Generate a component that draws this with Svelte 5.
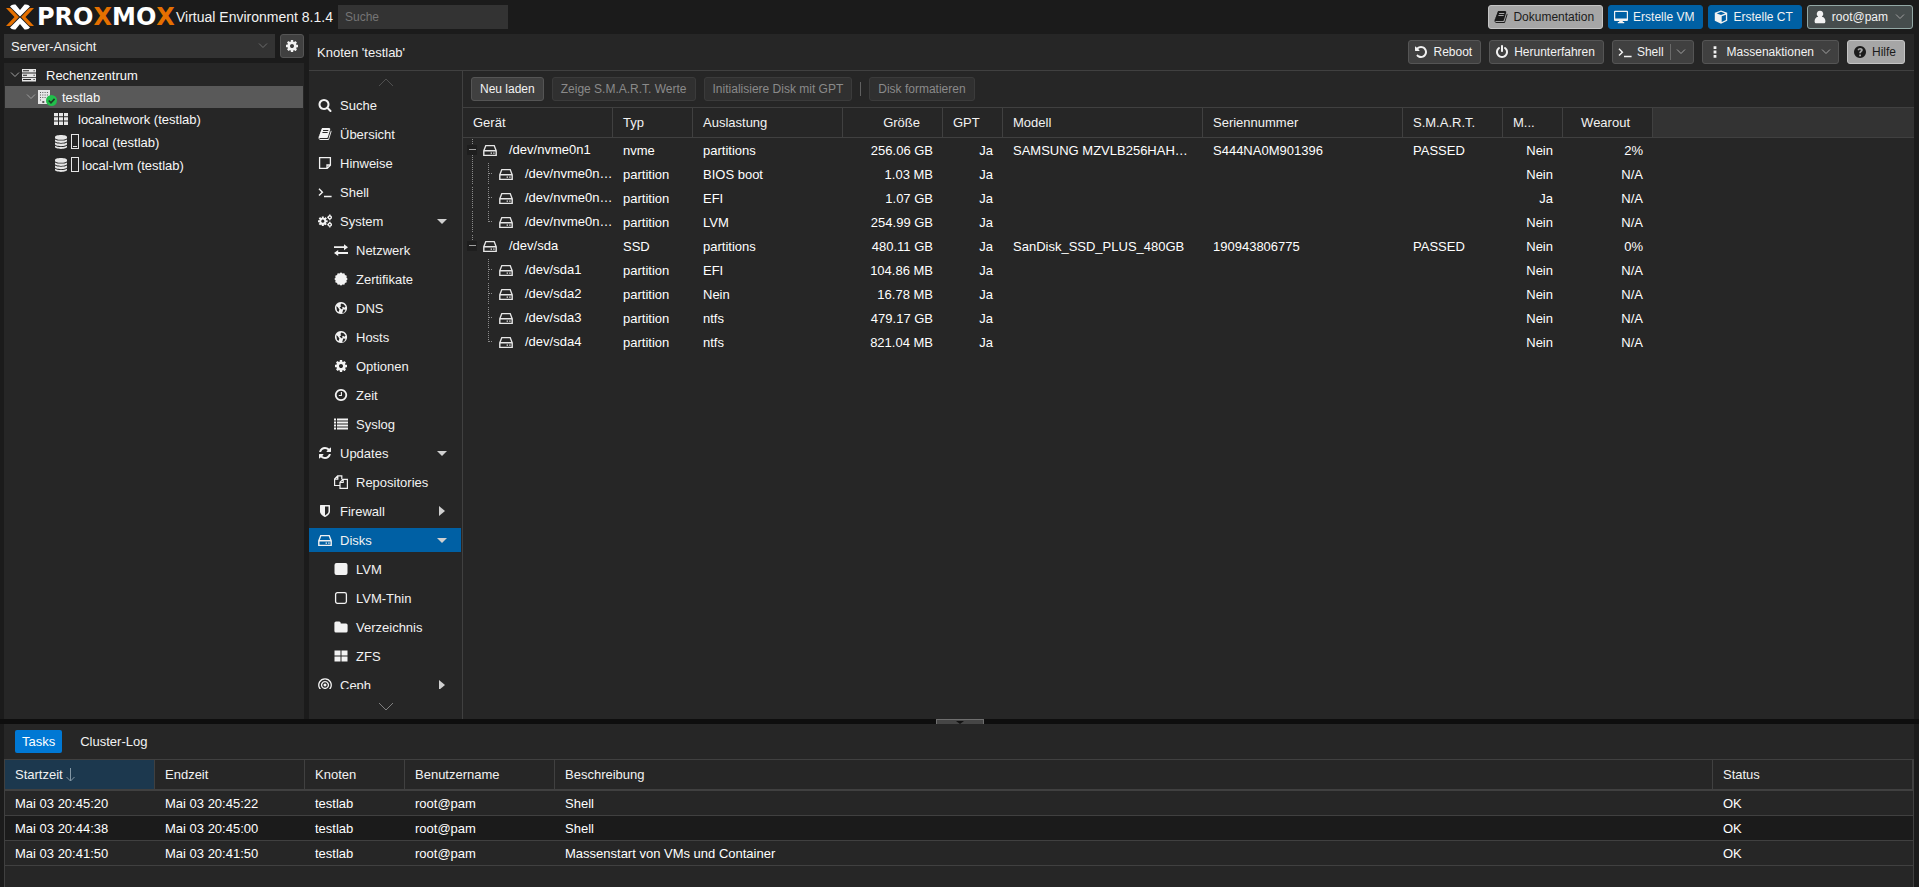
<script>
    const fa = 1792

    const cog = 'M1152 896q0-106-75-181t-181-75-181 75-75 181 75 181 181 75 181-75 75-181zm512-109v222q0 12-8 23t-20 13l-185 28q-19 54-39 91 35 50 107 138 10 12 10 25t-9 23q-27 37-99 108t-94 71q-12 0-26-9l-138-108q-44 23-91 38-16 136-29 186-7 28-36 28h-222q-14 0-24.5-8.5t-11.5-21.5l-28-184q-49-16-90-37l-141 107q-10 9-25 9-14 0-25-11-126-114-165-168-7-10-7-23 0-12 8-23 15-21 51-66.5t54-70.5q-27-50-41-99l-183-27q-13-2-21-12.5t-8-23.5v-222q0-12 8-23t19-13l186-28q14-46 39-92-40-57-107-138-10-12-10-24 0-10 9-23 26-36 98.5-107.5t94.5-71.5q13 0 26 10l138 107q44-23 91-38 16-136 29-186 7-28 36-28h222q14 0 24.5 8.5t11.5 21.5l28 184q49 16 90 37l142-107q9-9 24-9 13 0 25 10 129 119 165 170 7 8 7 22 0 12-8 23-15 21-51 66.5t-54 70.5q26 50 41 98l183 28q13 2 21 12.5t8 23.5z'

    // 12 pointed badge
    const burst = 'M' + Array.from({ length: 24 }, (_, i) => {
        const r = i % 2 ? 5.6 : 6.7
        const a = (i * Math.PI) / 12
        return (7 + r * Math.cos(a)).toFixed(2) + ' ' + (7 + r * Math.sin(a)).toFixed(2)
    }).join('L') + 'z'

    const icons = {
        cog: { box: fa, fill: cog },
        search: { box: fa, fill: 'M1216 832q0-185-131.5-316.5t-316.5-131.5-316.5 131.5-131.5 316.5 131.5 316.5 316.5 131.5 316.5-131.5 131.5-316.5zm512 832q0 52-38 90t-90 38q-54 0-90-38l-343-342q-179 124-399 124-143 0-273.5-55.5t-225-150-150-225-55.5-273.5 55.5-273.5 150-225 225-150 273.5-55.5 273.5 55.5 225 150 150 225 55.5 273.5q0 220-124 399l343 343q37 37 37 90z' },
        book: { box: fa, fill: 'M1703 478q40 57 18 129l-275 906q-19 64-76.5 107.5t-122.5 43.5h-923q-77 0-148.5-53.5t-99.5-131.5q-24-67-2-127 0-4 3-27t4-37q1-8-3-21.5t-3-19.5q2-11 8-21t16.5-23.5 16.5-23.5q23-38 45-91.5t30-91.5q3-10 .5-30t-.5-28q3-11 17-28t17-23q21-36 42-92t25-90q1-9-2.5-32t.5-28q4-13 22-30.5t22-22.5q19-26 42.5-84.5t27.5-96.5q1-8-3-25.5t-2-26.5q2-8 9-18t18-23 17-21q8-12 16.5-30.5t15-35 16-36 19.5-32 26.5-23.5 36-11.5 47.5 5.5l-1 3q38-9 51-9h761q74 0 114 56t18 130l-274 906q-36 119-71.5 153.5t-128.5 34.5h-869q-27 0-38 15-11 16-1 43 24 70 144 70h923q29 0 56-15.5t35-41.5l300-987q7-22 5-57 38 15 59 43zm-1064 2q-4 13 2 22.5t20 9.5h608q13 0 25.5-9.5t16.5-22.5l21-64q4-13-2-22.5t-20-9.5h-608q-13 0-25.5 9.5t-16.5 22.5zm-83 256q-4 13 2 22.5t20 9.5h608q13 0 25.5-9.5t16.5-22.5l21-64q4-13-2-22.5t-20-9.5h-608q-13 0-25.5 9.5t-16.5 22.5z' },
        refresh: { box: fa, fill: 'M1639 1056q0 5-1 7-64 268-268 434.5t-478 166.5q-146 0-282.5-55t-243.5-157l-129 129q-19 19-45 19t-45-19-19-45v-448q0-26 19-45t45-19h448q26 0 45 19t19 45-19 45l-137 137q71 66 161 102t187 36q134 0 250-65t186-179q11-17 53-117 8-23 30-23h192q13 0 22.5 9.5t9.5 22.5zm25-800v448q0 26-19 45t-45 19h-448q-26 0-45-19t-19-45 19-45l138-138q-148-137-349-137-134 0-250 65t-186 179q-11 17-53 117-8 23-30 23h-199q-13 0-22.5-9.5t-9.5-22.5v-7q65-268 270-434.5t480-166.5q146 0 284 55.5t245 156.5l130-129q19-19 45-19t45 19 19 45z' },
        undo: { box: fa, fill: 'M1664 896q0 156-61 298t-164 245-245 164-298 61q-172 0-327-72.5t-264-204.5q-7-10-6.5-22.5t8.5-20.5l137-138q10-9 25-9 16 2 23 12 73 95 179 147t225 52q104 0 198.5-40.5t163.5-109.5 109.5-163.5 40.5-198.5-40.5-198.5-109.5-163.5-163.5-109.5-198.5-40.5q-98 0-188 35.5t-160 101.5l137 138q31 30 14 69-17 40-59 40h-448q-26 0-45-19t-19-45v-448q0-42 40-59 39-17 69 14l130 129q107-101 244.5-156.5t284.5-55.5q156 0 298 61t245 164 164 245 61 298z' },
        power: { box: fa, fill: 'M1664 896q0 156-61 298t-164 245-245 164-298 61-298-61-245-164-164-245-61-298q0-182 80.5-343t226.5-270q43-32 95.5-25t83.5 50q32 42 24.5 94.5t-49.5 84.5q-98 74-151.5 181t-53.5 228q0 104 40.5 198.5t109.5 163.5 163.5 109.5 198.5 40.5 198.5-40.5 163.5-109.5 109.5-163.5 40.5-198.5q0-121-53.5-228t-151.5-181q-42-32-49.5-84.5t24.5-94.5q31-43 84-50t95 25q146 109 226.5 270t80.5 343zm-640-768v640q0 52-38 90t-90 38-90-38-38-90v-640q0-52 38-90t90-38 90 38 38 90z' },
        shield: { box: fa, fill: 'M1344 960v-640h-448v1137q119-63 213-137 235-184 235-360zm192-768v768q0 86-33.5 170.5t-83 150-118 127.5-126.5 103-121 77.5-89.5 49.5-42.5 20q-12 6-26 6t-26-6q-16-7-42.5-20t-89.5-49.5-121-77.5-126.5-103-118-127.5-83-150-33.5-170.5v-768q0-26 19-45t45-19h1152q26 0 45 19t19 45z' },
        note: { line: 'M1.6 1.6h10.8v7.6l-3.2 3.2h-7.6zM9 12.4v-3.4h3.4', w: 1.3 },
        terminal: { line: 'M1 3.8l3.4 3.4L1 10.6M6 11.5h7.6', w: 1.4 },
        cogs: { line: 'M4.8 4.6a2.6 2.6 0 1 0 .01 0M4.8 2.4v2M4.8 10v2M0 7.2h2M7.6 7.2h2M1.4 3.8l1.4 1.4M6.8 9.2l1.4 1.4M1.4 10.6l1.4-1.4M6.8 5.2l1.4-1.4', w: 2, thin: 'M11.8 1.9a1.5 1.5 0 1 0 .01 0M11.8.5v1M11.8 5.2v1M9.2 3.4h1M13.3 3.4h.7M11.8 9.1a1.5 1.5 0 1 0 .01 0M11.8 7.7v1M11.8 12.4v1M9.2 10.6h1M13.3 10.6h.7', tw: 1.4 },
        exchange: { line: 'M0 4.2h11M3 10h11', w: 1.8, fill: 'M10 1.2l4 3-4 3zM4.2 7l-4.2 3 4.2 3z' },
        badge: { fill: burst },
        globe: { fill: 'M7 .9a6.1 6.1 0 1 0 .01 0zM7.4 2.6l2.3.6 1.9 2.2-1.2 1.3-1.4-1-1.1 1.2 1 1.2-1.5.2-1.8-1.7 1.6-1.3-.8-1.2zM2.3 5.2l1.3.8 1.8 2.6-.8 2.4-1.6-1.2zM9.2 8.6l2.4.1-1.4 2.7-2 .8z' },
        clock: { line: 'M7 1.8a5.2 5.2 0 1 0 .01 0z', w: 1.8, thin: 'M7.4 4v3.5H4.8', tw: 1.1 },
        list: { fill: 'M0 1.5h2v2h-2zM3 1.5h11v2h-11zM0 4.5h2v2h-2zM3 4.5h11v2h-11zM0 7.5h2v2h-2zM3 7.5h11v2h-11zM0 10.5h2v2h-2zM3 10.5h11v2h-11z' },
        files: { line: 'M5.6 10.5H.6v-6.6l3-3h4.2v3.4M3.8.9v3.2H.6M6 13.4V7.3l3-3h4.4v9.1zM9.2 4.3v3.2H6', w: 1.2 },
        square: { fill: 'M2.5 1h9a2 2 0 0 1 2 2v8a2 2 0 0 1-2 2h-9a2 2 0 0 1-2-2v-8a2 2 0 0 1 2-2z' },
        squareO: { line: 'M3.3 1.7h7.4a1.7 1.7 0 0 1 1.7 1.7v7.2a1.7 1.7 0 0 1-1.7 1.7h-7.4a1.7 1.7 0 0 1-1.7-1.7v-7.2a1.7 1.7 0 0 1 1.7-1.7z', w: 1.3 },
        folder: { fill: 'M2 1.5h3.2a1.5 1.5 0 0 1 1.5 1.5v.5h5.3a1.6 1.6 0 0 1 1.6 1.6v5.8a1.6 1.6 0 0 1-1.6 1.6h-10a1.6 1.6 0 0 1-1.6-1.6v-7.8a1.6 1.6 0 0 1 1.6-1.6z' },
        tiles: { fill: 'M.5 1.5h6v5h-6zM7.5 1.5h6v5h-6zM.5 7.5h6v5h-6zM7.5 7.5h6v5h-6z' },
        target: { line: 'M7 .8a6.2 6.2 0 1 0 .01 0zM7 3.6a3.4 3.4 0 1 0 .01 0z', w: 1.3, fill: 'M7 5.5a1.5 1.5 0 1 0 .01 0z' },
        disk: { line: 'M.8 7.8l2-5.2h8.4l2 5.2v4.6H.8zM.8 7.8h12.4', w: 1.4, fill: 'M7.6 9.4h1.4v1.4h-1.4zM10.2 9.4h1.4v1.4h-1.4z' },
        desktop: { fill: 'M1 .8h12a1 1 0 0 1 1 1v8.2a1 1 0 0 1-1 1h-4.2v1h1.4v1.2H3.8V12h1.4v-1H1a1 1 0 0 1-1-1V1.8a1 1 0 0 1 1-1zM1.2 2v6.4h11.6V2z' },
        cube: { fill: 'M7 .5l6.2 2.3v7.9L7 13.7.8 10.7V2.8zM7 1.8L2.8 3.4 7 5l4.2-1.6zM7.7 6.3v5.6l4.2-2V4.7z' },
        user: { fill: 'M7 .8a3.2 3.2 0 0 1 1.8 5.9c2.7.4 3.6 2.5 3.6 4.7 0 1.3-.8 1.9-1.8 1.9H3.4c-1 0-1.8-.6-1.8-1.9 0-2.2.9-4.3 3.6-4.7A3.2 3.2 0 0 1 7 .8z' },
        dots: { fill: 'M5.6 1.2h2.8v2.8h-2.8zM5.6 5.6h2.8v2.8h-2.8zM5.6 10h2.8v2.8h-2.8z' },
        help: { fill: 'M7 1a6 6 0 1 0 .01 0zM6.2 9.5h1.8v1.7H6.2zM4.5 5.1c.3-1.5 1.3-2.2 2.7-2.2 1.6 0 2.6.8 2.6 2.1 0 1.6-1.7 1.8-1.8 3.2H6.2c0-2 1.6-2.1 1.6-3.1 0-.4-.3-.6-.8-.6s-.8.3-1 .9z' },
        server: { fill: 'M0 1h14v3.6H0zM1 2.3v1h6v-1zM11.5 2.3v1h1.2v-1zM0 5.4h14V9H0zM1 6.7v1h4v-1zM11.5 6.7v1h1.2v-1zM0 9.8h14v3.6H0zM1 11.1v1h8v-1zM11.5 11.1v1h1.2v-1z' },
        grid: { fill: 'M0 1h4v3.3H0zM5 1h4v3.3H5zM10 1h4v3.3h-4zM0 5.3h4v3.3H0zM5 5.3h4v3.3H5zM10 5.3h4v3.3h-4zM0 9.6h4v3.3H0zM5 9.6h4v3.3H5zM10 9.6h4v3.3h-4z' },
        database: { fill: 'M7 0c3.3 0 6 .8 6 1.9v1c0 1-2.7 1.9-6 1.9s-6-.9-6-1.9v-1C1 .8 3.7 0 7 0zM1 4.4c1.2.8 3.5 1.2 6 1.2s4.8-.4 6-1.2v1.7C13 7.1 10.3 8 7 8s-6-.9-6-1.9zM1 7.6c1.2.8 3.5 1.2 6 1.2s4.8-.4 6-1.2v1.7c0 1-2.7 1.9-6 1.9s-6-.9-6-1.9zM1 10.8c1.2.8 3.5 1.2 6 1.2s4.8-.4 6-1.2v1.3c0 1-2.7 1.9-6 1.9s-6-.9-6-1.9z' },
        building: { fill: 'M1 0h12v14H1zM3 2v1h1V2zM5.3 2v1h1V2zM7.6 2v1h1V2zM9.9 2v1h1V2zM3 4.5v1h1v-1zM5.3 4.5v1h1v-1zM7.6 4.5v1h1v-1zM9.9 4.5v1h1v-1zM3 7v1h1V7zM5.3 7v1h1V7zM7.6 7v1h1V7zM3 9.5v1h1v-1zM5.3 11v2h2v-2z' },
    }

    const menu = [
        { text: 'Suche', icon: 'search' },
        { text: 'Übersicht', icon: 'book' },
        { text: 'Hinweise', icon: 'note' },
        { text: 'Shell', icon: 'terminal' },
        { text: 'System', icon: 'cogs', arrow: 'down' },
        { text: 'Netzwerk', icon: 'exchange', sub: true },
        { text: 'Zertifikate', icon: 'badge', sub: true },
        { text: 'DNS', icon: 'globe', sub: true },
        { text: 'Hosts', icon: 'globe', sub: true },
        { text: 'Optionen', icon: 'cog', sub: true },
        { text: 'Zeit', icon: 'clock', sub: true },
        { text: 'Syslog', icon: 'list', sub: true },
        { text: 'Updates', icon: 'refresh', arrow: 'down' },
        { text: 'Repositories', icon: 'files', sub: true },
        { text: 'Firewall', icon: 'shield', arrow: 'right' },
        { text: 'Disks', icon: 'disk', arrow: 'down' },
        { text: 'LVM', icon: 'square', sub: true },
        { text: 'LVM-Thin', icon: 'squareO', sub: true },
        { text: 'Verzeichnis', icon: 'folder', sub: true },
        { text: 'ZFS', icon: 'tiles', sub: true },
        { text: 'Ceph', icon: 'target', arrow: 'right' },
    ]

    let active = $state('Disks')
    let tab = $state('Tasks')

    // elbows are drawn left to right in front of the disk icon
    const disks = [
        { elbows: ['top'], dev: '/dev/nvme0n1', typ: 'nvme', usage: 'partitions', size: '256.06 GB', model: 'SAMSUNG MZVLB256HAH…', serial: 'S444NA0M901396', smart: 'PASSED', mounted: 'Nein', wear: '2%' },
        { elbows: ['line', 'tee'], dev: '/dev/nvme0n…', typ: 'partition', usage: 'BIOS boot', size: '1.03 MB', mounted: 'Nein', wear: 'N/A' },
        { elbows: ['line', 'tee'], dev: '/dev/nvme0n…', typ: 'partition', usage: 'EFI', size: '1.07 GB', mounted: 'Ja', wear: 'N/A' },
        { elbows: ['line', 'end'], dev: '/dev/nvme0n…', typ: 'partition', usage: 'LVM', size: '254.99 GB', mounted: 'Nein', wear: 'N/A' },
        { elbows: ['last'], dev: '/dev/sda', typ: 'SSD', usage: 'partitions', size: '480.11 GB', model: 'SanDisk_SSD_PLUS_480GB', serial: '190943806775', smart: 'PASSED', mounted: 'Nein', wear: '0%' },
        { elbows: ['none', 'tee'], dev: '/dev/sda1', typ: 'partition', usage: 'EFI', size: '104.86 MB', mounted: 'Nein', wear: 'N/A' },
        { elbows: ['none', 'tee'], dev: '/dev/sda2', typ: 'partition', usage: 'Nein', size: '16.78 MB', mounted: 'Nein', wear: 'N/A' },
        { elbows: ['none', 'tee'], dev: '/dev/sda3', typ: 'partition', usage: 'ntfs', size: '479.17 GB', mounted: 'Nein', wear: 'N/A' },
        { elbows: ['none', 'end'], dev: '/dev/sda4', typ: 'partition', usage: 'ntfs', size: '821.04 MB', mounted: 'Nein', wear: 'N/A' },
    ]

    const elbowPaths = {
        top: 'M8.5 1v6M8.5 17v7',
        last: 'M8.5 1v6',
        line: 'M8.5 1v22',
        tee: 'M8.5 1v22M9 11.5h4',
        end: 'M8.5 1v11M9 11.5h4',
        none: '',
    }

    const tasks = [
        { start: 'Mai 03 20:45:20', end: 'Mai 03 20:45:22', text: 'Shell' },
        { start: 'Mai 03 20:44:38', end: 'Mai 03 20:45:00', text: 'Shell' },
        { start: 'Mai 03 20:41:50', end: 'Mai 03 20:41:50', text: 'Massenstart von VMs und Container' },
    ]
</script>

{#snippet icon(name)}
    {@const i = icons[name]}
    <svg class="icon" viewBox="0 0 {i.box ?? 14} {i.box ?? 14}" aria-hidden="true">
        {#if i.fill}<path d={i.fill} fill="currentColor" fill-rule="evenodd" />{/if}
        {#if i.line}<path d={i.line} fill="none" stroke="currentColor" stroke-width={i.w} />{/if}
        {#if i.thin}<path d={i.thin} fill="none" stroke="currentColor" stroke-width={i.tw} />{/if}
    </svg>
{/snippet}

{#snippet chevron()}
    <svg class="chevron" viewBox="0 0 10 6" aria-hidden="true"><path d="M1 .5l4 4 4-4" /></svg>
{/snippet}

<div class="page">
    <header>
        <div class="logo">
            <svg viewBox="0 0 30 28" aria-hidden="true">
                <path fill="#fff" d="M5 3.5Q6.5 1.500 9 1.500h1.500L15 7l4.500-5.500H21q2.500 0 4 2L15 13.500zM5 24.500q1.500 2 4 2h1.500L15 21l4.500 5.500H21q2.500 0 4-2L15 14.500z" />
                <path fill="#e57000" d="M1 5h3q1.500 0 2.500 1l7.500 8-7.500 8q-1 1-2.500 1H1l8.500-9zM29 5h-3q-1.500 0-2.500 1L16 14l7.500 8q1 1 2.500 1h3l-8.500-9z" />
            </svg>
            <span class="brand">PRO<b>X</b>MO<b>X</b></span>
        </div>
        <span class="version">Virtual Environment 8.1.4</span>
        <input class="search" type="text" placeholder="Suche" aria-label="Suche" />
        <div class="actions">
            <button class="btn light">{@render icon('book')}Dokumentation</button>
            <button class="btn blue">{@render icon('desktop')}Erstelle VM</button>
            <button class="btn blue">{@render icon('cube')}Erstelle CT</button>
            <button class="btn user">{@render icon('user')}root@pam{@render chevron()}</button>
        </div>
    </header>

    <main>
        <aside>
            <div class="view">
                <div class="select">
                    <select aria-label="Ansicht">
                        <option>Server-Ansicht</option>
                    </select>
                    {@render chevron()}
                </div>
                <button class="btn gear" aria-label="Einstellungen">{@render icon('cog')}</button>
            </div>
            <ul class="tree">
                <li class="l0">{@render chevron()}{@render icon('server')}<span class="label">Rechenzentrum</span></li>
                <li class="l1 selected">
                    {@render chevron()}
                    <span class="node">
                        {@render icon('building')}
                        <svg class="ok" viewBox="0 0 10 10" aria-hidden="true">
                            <circle cx="5" cy="5" r="5" fill="#21bf4b" />
                            <path d="M2.5 5l2 2 3.3-3.5" fill="none" stroke="#1d3b26" stroke-width="1.5" />
                        </svg>
                    </span>
                    <span class="label">testlab</span>
                </li>
                <li class="l2">{@render icon('grid')}<span class="label">localnetwork (testlab)</span></li>
                <li class="l2 storage">{@render icon('database')}<i class="meter"><u></u></i><span class="label">local (testlab)</span></li>
                <li class="l2 storage">{@render icon('database')}<i class="meter"></i><span class="label">local-lvm (testlab)</span></li>
            </ul>
        </aside>

        <section class="content">
            <div class="title">
                <h1>Knoten 'testlab'</h1>
                <div class="actions">
                    <button class="btn">{@render icon('undo')}Reboot</button>
                    <button class="btn">{@render icon('power')}Herunterfahren</button>
                    <button class="btn">{@render icon('terminal')}Shell<span class="split"></span>{@render chevron()}</button>
                    <button class="btn">{@render icon('dots')}Massenaktionen{@render chevron()}</button>
                    <button class="btn light">{@render icon('help')}Hilfe</button>
                </div>
            </div>

            <div class="body">
                <nav>
                    <button class="scroll up" aria-label="Nach oben">
                        <svg viewBox="0 0 16 9" aria-hidden="true"><path d="M1 8l7-7 7 7" /></svg>
                    </button>
                    <div class="menu">
                        {#each menu as item}
                            <button class:sub={item.sub} class:active={item.text === active} onclick={() => (active = item.text)}>
                                {@render icon(item.icon)}
                                <span>{item.text}</span>
                                {#if item.arrow}
                                    <i class="arrow {item.arrow}"></i>
                                {/if}
                            </button>
                        {/each}
                    </div>
                    <button class="scroll down" aria-label="Nach unten">
                        <svg viewBox="0 0 16 9" aria-hidden="true"><path d="M1 1l7 7 7-7" /></svg>
                    </button>
                </nav>

                <div class="disks">
                    <div class="toolbar">
                        <button class="btn plain">Neu laden</button>
                        <button class="btn plain" disabled>Zeige S.M.A.R.T. Werte</button>
                        <button class="btn plain" disabled>Initialisiere Disk mit GPT</button>
                        <span class="sep"></span>
                        <button class="btn plain" disabled>Disk formatieren</button>
                    </div>
                    <table>
                        <colgroup>
                            <col class="w150" />
                            <col class="w80" />
                            <col class="w150" />
                            <col class="w100" />
                            <col class="w60" />
                            <col class="w200" />
                            <col class="w200" />
                            <col class="w100" />
                            <col class="w60" />
                            <col class="w90" />
                            <col />
                        </colgroup>
                        <thead>
                            <tr>
                                <th>Gerät</th>
                                <th>Typ</th>
                                <th>Auslastung</th>
                                <th class="num">Größe</th>
                                <th>GPT</th>
                                <th>Modell</th>
                                <th>Seriennummer</th>
                                <th>S.M.A.R.T.</th>
                                <th>M...</th>
                                <th class="num">Wearout</th>
                                <td class="rest"></td>
                            </tr>
                        </thead>
                        <tbody>
                            {#each disks as d}
                                <tr>
                                    <td class="dev">
                                        <div>
                                            {#each d.elbows as e}
                                                <svg class="elbow" viewBox="0 0 16 24" aria-hidden="true">
                                                    <path d={elbowPaths[e]} stroke="#8a8a8a" stroke-dasharray="1 1" fill="none" />
                                                    {#if e === 'top' || e === 'last'}
                                                        <path d="M3 7h10v10H3z" fill="#1e1e1e" />
                                                        <path d="M5 11.5h7" stroke="#a0a0a0" />
                                                    {/if}
                                                </svg>
                                            {/each}
                                            {@render icon('disk')}
                                            <span>{d.dev}</span>
                                        </div>
                                    </td>
                                    <td>{d.typ}</td>
                                    <td>{d.usage}</td>
                                    <td class="right">{d.size}</td>
                                    <td class="right">Ja</td>
                                    <td>{d.model ?? ''}</td>
                                    <td>{d.serial ?? ''}</td>
                                    <td>{d.smart ?? ''}</td>
                                    <td class="right">{d.mounted}</td>
                                    <td class="right">{d.wear}</td>
                                    <td></td>
                                </tr>
                            {/each}
                        </tbody>
                    </table>
                </div>
            </div>
        </section>
    </main>

    <div class="splitter">
        <button aria-label="Log einklappen"><i></i></button>
    </div>

    <footer>
        <div class="tabs">
            {#each ['Tasks', 'Cluster-Log'] as t}
                <button class:on={tab === t} onclick={() => (tab = t)}>{t}</button>
            {/each}
        </div>
        <div class="log">
            <table>
                <colgroup>
                    <col class="w150" />
                    <col class="w150" />
                    <col class="w100" />
                    <col class="w150" />
                    <col />
                    <col class="w200" />
                </colgroup>
                <thead>
                    <tr>
                        <th class="sorted">
                            Startzeit
                            <svg viewBox="0 0 9 14" aria-hidden="true"><path d="M4.5 0v13M.5 9l4 4 4-4" /></svg>
                        </th>
                        <th>Endzeit</th>
                        <th>Knoten</th>
                        <th>Benutzername</th>
                        <th>Beschreibung</th>
                        <th>Status</th>
                    </tr>
                </thead>
                <tbody>
                    {#each tasks as t}
                        <tr>
                            <td>{t.start}</td>
                            <td>{t.end}</td>
                            <td>testlab</td>
                            <td>root@pam</td>
                            <td>{t.text}</td>
                            <td>OK</td>
                        </tr>
                    {/each}
                </tbody>
            </table>
        </div>
    </footer>
</div>

<style>
:global(body){
    background-color: #1b1b1b;
}

.page{
    display: flex;
    flex-direction: column;
    height: 100vh;
    overflow: hidden;
    color: #f2f2f2;
    font: 13px/18px "Liberation Sans", Arial, Helvetica, sans-serif;
}

button, input, select{
    font-family: inherit;
    color: inherit;
    margin: 0;
}

.icon{
    width: 14px;
    height: 14px;
    flex: none;
}

.chevron{
    width: 10px;
    height: 6px;
    flex: none;
}

.chevron path{
    fill: none;
    stroke: #a0a0a0;
}

/* header */

header{
    display: flex;
    align-items: center;
    height: 34px;
    padding: 0 6px 0 5px;
    flex: none;
}

.logo{
    display: flex;
    align-items: center;
    gap: 2px;
    width: 171px;
}

.logo svg{
    width: 30px;
    height: 28px;
    flex: none;
}

.brand{
    font: bold 24px/28px "DejaVu Sans", sans-serif;
    color: #fff;
}

.brand b{
    color: #e57000;
}

.version{
    font-size: 14px;
    white-space: nowrap;
    margin-right: 5px;
}

.search{
    width: 170px;
    height: 24px;
    box-sizing: border-box;
    border: 0;
    padding: 0 7px;
    background-color: #333;
    font-size: 12px;
}

.search::placeholder{
    color: #757575;
    opacity: 1;
}

.actions{
    display: flex;
    gap: 8px;
    margin-left: auto;
}

header .actions{
    gap: 5px;
}

.btn{
    display: flex;
    align-items: center;
    height: 24px;
    box-sizing: border-box;
    border: 1px solid #555;
    border-radius: 3px;
    padding: 0 8px 0 5px;
    background-color: #404040;
    font-size: 12px;
    line-height: 16px;
    white-space: nowrap;
}

.btn .icon{
    margin-right: 5px;
}

.btn .chevron{
    margin-left: 7px;
    margin-right: -1px;
}

.btn.light{
    background-color: #a6a6a6;
    border-color: #c4c4c4;
    color: #1b1b1b;
}

.btn.blue{
    background-color: #0060a4;
    border-color: #0060a4;
}

.btn.user{
    background-color: #464d4d;
    border-color: #93a8a5;
}

.btn.plain{
    padding: 0 8px;
}

.btn:disabled{
    background-color: #303030;
    border-color: #3b3b3b;
    color: #8a8a8a;
}

.split{
    width: 1px;
    height: 16px;
    margin-left: 6px;
    margin-right: -2px;
    background-color: #6a6a6a;
}

/* tree */

main{
    display: flex;
    gap: 5px;
    flex: 1;
    min-height: 0;
    padding: 0 5px 0 4px;
}

aside{
    display: flex;
    flex-direction: column;
    gap: 5px;
    width: 300px;
    flex: none;
}

.view{
    display: flex;
    gap: 5px;
}

.select{
    display: flex;
    align-items: center;
    flex: 1;
    background-color: #333;
}

.select select{
    appearance: none;
    flex: 1;
    height: 24px;
    border: 0;
    padding: 0 7px;
    background-color: transparent;
    font-size: 13px;
}

.select .chevron{
    margin-right: 7px;
}

.select .chevron path{
    stroke: #6c6c6c;
}

.btn.gear{
    width: 24px;
    padding: 0;
    justify-content: center;
}

.gear .icon{
    margin: 0;
}

.tree{
    flex: 1;
    margin: 0;
    padding: 1px;
    list-style: none;
    background-color: #262626;
}

.tree li{
    display: flex;
    align-items: center;
    height: 22px;
    color: #f8f8f8;
}

.tree .chevron{
    margin-right: 1px;
}

.tree .icon{
    width: 16px;
    color: #e6e6e6;
}

.tree .l0{ padding-left: 5px; }
.tree .l1{ padding-left: 21px; }
.tree .l2{ padding-left: 48px; }

.tree .storage{
    height: 23px;
}

.label{
    padding-top: 2px;
}

.l0 .label, .l2 .label{
    margin-left: 9px;
}

.selected{
    background-color: #595959;
}

.node{
    position: relative;
    display: flex;
    width: 20px;
    margin-right: 5px;
}

.node .icon{
    height: 16px;
    width: 14px;
}

.ok{
    position: absolute;
    left: 9px;
    top: 6px;
    width: 11px;
    height: 11px;
}

.meter{
    display: flex;
    align-items: flex-end;
    justify-content: center;
    box-sizing: border-box;
    width: 8px;
    height: 15px;
    margin-left: 2px;
    border: 1px solid #e6e6e6;
}

.meter u{
    width: 4px;
    height: 1px;
    margin-bottom: 1px;
    background-color: #e6e6e6;
}

.storage .meter + .label{
    margin-left: 3px;
}

/* node panel */

.content{
    display: flex;
    flex-direction: column;
    flex: 1;
    min-width: 0;
    background-color: #262626;
}

.title{
    display: flex;
    align-items: center;
    height: 36px;
    flex: none;
    padding: 0 9px 0 8px;
    border-bottom: 1px solid #404040;
}

h1{
    margin: 0;
    padding-top: 2px;
    font-size: 13px;
    font-weight: normal;
}

.body{
    display: flex;
    flex: 1;
    min-height: 0;
}

nav{
    display: flex;
    flex-direction: column;
    width: 153px;
    flex: none;
    border-right: 1px solid #404040;
}

.scroll{
    display: flex;
    justify-content: center;
    align-items: center;
    height: 22px;
    flex: none;
    border: 0;
    padding: 0;
    background: none;
}

.scroll.down{
    height: 30px;
    padding-top: 4px;
}

.scroll svg{
    width: 16px;
    height: 9px;
}

.scroll path{
    fill: none;
    stroke: #808080;
}

.scroll.up path{
    stroke: #505050;
}

.menu{
    display: flex;
    flex-direction: column;
    gap: 5px;
    flex: 1;
    min-height: 0;
    overflow: hidden;
}

.menu button{
    display: flex;
    align-items: center;
    gap: 8px;
    height: 24px;
    width: 152px;
    flex: none;
    border: 0;
    padding: 0 12px 0 9px;
    background: none;
    font-size: 13px;
    text-align: left;
}

.menu button.sub{
    padding-left: 25px;
}

.menu button.active{
    background-color: #0060a4;
}

.arrow{
    margin-left: auto;
    border: 5px solid transparent;
}

.arrow.down{
    border-top-color: #d0d0d0;
    border-bottom: 0;
    margin-right: 2px;
}

.arrow.right{
    border-left: 6px solid #d0d0d0;
    border-right: 0;
    margin-right: 4px;
}

.disks{
    flex: 1;
    min-width: 0;
}

.toolbar{
    display: flex;
    align-items: center;
    gap: 8px;
    height: 36px;
    padding: 0 8px;
}

.sep{
    width: 1px;
    height: 14px;
    background-color: #606060;
}

/* tables */

table{
    width: 100%;
    table-layout: fixed;
    border-collapse: separate;
    border-spacing: 0;
}

.w60{ width: 60px; }
.w80{ width: 80px; }
.w90{ width: 90px; }
.w100{ width: 100px; }
.w150{ width: 150px; }
.w200{ width: 200px; }

th, td{
    box-sizing: border-box;
    padding: 0 10px;
    white-space: nowrap;
    text-align: left;
    font-weight: normal;
}

th{
    height: 31px;
    border: 1px solid #404040;
    border-left: 0;
}

td{
    height: 24px;
    padding-top: 2px;
    color: #fff;
}

th.num{
    text-align: right;
    padding-right: 22px;
}

.rest{
    background-color: #333;
    border: 1px solid #404040;
    border-width: 1px 0;
}

.right{
    text-align: right;
}

.dev{
    padding: 0;
}

.dev div{
    display: flex;
    align-items: center;
    height: 24px;
    padding-left: 1px;
}

.dev span{
    margin-left: 12px;
}

.dev .icon{
    margin-left: 3px;
    color: #e6e6e6;
}

.elbow{
    width: 16px;
    height: 24px;
    flex: none;
}

/* log */

.splitter{
    display: flex;
    justify-content: center;
    height: 5px;
    flex: none;
    background-color: #0e0e0e;
}

.splitter button{
    display: flex;
    justify-content: center;
    width: 48px;
    height: 5px;
    padding: 1px 0 0;
    border: 1px solid #6e6e6e;
    border-bottom: 0;
    background-color: #464646;
}

.splitter i{
    height: 0;
    border: 4px solid transparent;
    border-top: 3px solid #111;
    border-bottom: 0;
}

footer{
    display: flex;
    flex-direction: column;
    height: 163px;
    flex: none;
    margin: 0 5px 0 4px;
    background-color: #262626;
}

.tabs{
    display: flex;
    align-items: center;
    gap: 11px;
    height: 35px;
    padding: 0 11px;
}

.tabs button{
    height: 23px;
    padding: 0 7px;
    border: 0;
    border-radius: 2px;
    background: none;
    font-size: 13px;
}

.tabs button.on{
    background-color: #0078d4;
    color: #fff;
}

.log{
    flex: 1;
    border: 1px solid #404040;
    border-width: 0 1px;
}

.log th{
    height: 32px;
    border-bottom-width: 2px;
}

.log td{
    height: 25px;
    border-bottom: 1px solid #404040;
}

.log tbody tr:nth-child(even){
    background-color: #1b1b1b;
}

.log .sorted{
    background-color: #1c384e;
}

.sorted svg{
    width: 9px;
    height: 14px;
    vertical-align: -3px;
}

.sorted path{
    fill: none;
    stroke: #8296a4;
}
</style>
